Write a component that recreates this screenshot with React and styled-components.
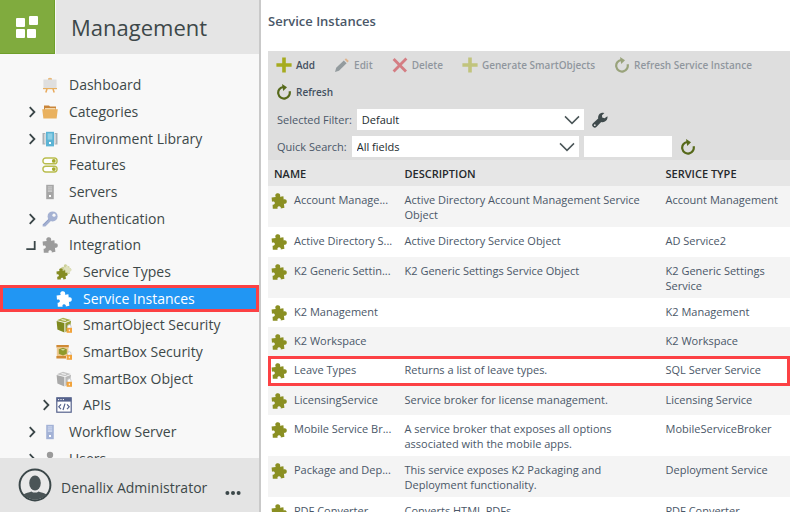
import React from "react";
import styled, { createGlobalStyle, css } from "styled-components";

const GlobalStyle = createGlobalStyle`
  *, *::before, *::after { box-sizing: border-box; }
  body { margin: 0; background: #fff; }
  body, button, input, select { font-family: "Open Sans", "Noto Sans", sans-serif; }
`;

/* ---------- icons ---------- */

const Svg = ({ size = 16, children, ...rest }) => (
  <svg width={size} height={size} viewBox="0 0 16 16" fill="none" aria-hidden="true" {...rest}>
    {children}
  </svg>
);

const PUZZLE =
  "M.6 4.6 4.8 4C3.6 2 4.8 .3 6.8 .3S9.7 2 9 3.8L12.4 3.2 12.7 6.6C14.2 5.8 15.8 6.8 15.8 8.6S14.2 11.4 12.9 10.6L13.4 14.8 9.8 15.4C10.2 14 9.2 13 7.9 13.2S6.2 14.2 6.6 15.7L1.8 15.7 1.6 11.7C3 12 4.2 11 3.8 9.6S2.2 8.2 1 8.8Z";

const Puzzle = ({ color = "#8a8f22", size }) => (
  <Svg size={size}><path d={PUZZLE} fill={color} /></Svg>
);

const PuzzleStack = () => (
  <Svg>
    <path d={PUZZLE} fill="#cdd09a" transform="translate(5 0) scale(.66)" />
    <path d={PUZZLE} fill="#dfe1bd" transform="translate(8 1) rotate(8) scale(.5)" />
    <path d={PUZZLE} fill="#858c22" transform="translate(0 4) scale(.74)" />
  </Svg>
);

const Easel = () => (
  <Svg>
    <path d="M6 1.6Q8 0 10 1.6V3H6Z" fill="#e8b878" />
    <path d="M1.4 2.5H14.6V11H1.4Z" fill="#dfdfdf" />
    <path d="M1 11H15V12.2H1Z" fill="#e8b060" />
    <path d="M5 12 3.8 15.4M11 12 12.2 15.4" stroke="#e8a95a" strokeWidth="1.5" />
  </Svg>
);

const Folder = () => (
  <Svg>
    <path d="M2 1.6H7L8 2.6H14V6H2Z" fill="#c9853a" />
    <path d="M3 4H13.5V6H3Z" fill="#f3d9ae" />
    <path d="M.2 5.2H15.8L14.6 14.4H1.4Z" fill="#e9b15f" />
  </Svg>
);

const ServerCluster = () => (
  <Svg>
    <path d="M.5 2H3.4V13.5H.5ZM12.6 2H15.5V13.5H12.6Z" fill="#a9b0b5" />
    <path d="M2.2 3H3.4V12.5H2.2ZM12.6 3H13.8V12.5H12.6Z" fill="#d7dbde" />
    <path d="M4 .8H12V15.4H4Z" fill="#5bb3d4" />
    <path d="M5.6 2.4H10.4V8.6H5.6Z" fill="#8fd0e6" />
    <path d="M7 11H9V13H7Z" fill="#fff" />
  </Svg>
);

const Toggles = () => (
  <Svg>
    <rect x=".9" y="1" width="14.2" height="5.8" rx="2.9" fill="#fff" stroke="#b9bd4e" strokeWidth="1.4" />
    <rect x=".9" y="9.2" width="14.2" height="5.8" rx="2.9" fill="#fff" stroke="#b9bd4e" strokeWidth="1.4" />
    <circle cx="11.8" cy="3.9" r="1.9" fill="#a3a82a" />
    <circle cx="11.8" cy="12.1" r="1.9" fill="#a3a82a" />
  </Svg>
);

const Server = ({ body = "#a6a6a6", panel = "#c9c9c9" }) => (
  <Svg>
    <path d="M4.2 .8H11.8V15.2H4.2Z" fill={body} />
    <path d="M5.8 2.2H10.2V8H5.8Z" fill={panel} />
    <path d="M5.8 3.8H10.2M5.8 5.8H10.2" stroke={body} strokeWidth=".6" />
    <path d="M7 11H9V13H7Z" fill="#fff" />
  </Svg>
);

const Key = () => (
  <Svg>
    <circle cx="10.6" cy="5.4" r="5" fill="#a4b1d2" />
    <circle cx="12" cy="4.2" r="1.6" fill="#f8f8f8" />
    <path d="M7.4 7 .6 13.6V15.4H3.4L9.4 9.4Z" fill="#a4b1d2" />
    <path d="M6.8 8.4 1.4 14" stroke="#8796bf" strokeWidth=".8" />
  </Svg>
);

const Lock = () => (
  <g>
    <path d="M11.6 11V9.4a1.7 1.7 0 0 1 3.4 0V11" fill="#fff" stroke="#c9ccd0" strokeWidth="1" />
    <path d="M10.6 10.8H16V15.8H10.6Z" fill="#f1a33c" />
    <path d="M12.8 12.4H13.8V14.2H12.8Z" fill="#fff" />
  </g>
);

const Cube = ({ top, left, right }) => (
  <Svg>
    <path d="M7 .8 14.8 3 9 5.2 .8 3.2Z" fill={top} />
    <path d="M.6 4 8.4 6V15.4L1.4 12.6Z" fill={left} />
    <path d="M9.4 6 15 3.8 14 12 9.4 15.2Z" fill={right} />
    <path d="M5.6 2.6 9.8 3.4" stroke="#fff" strokeWidth=".9" />
    <Lock />
  </Svg>
);

const BoxSecurity = () => (
  <Svg>
    <path d="M.4 1H12.8V3.4H.4ZM.4 12H10V14.6H.4Z" fill="#d08a35" />
    <path d="M.8 3.4H12.4V12H.8Z" fill="#efc88f" />
    <path d="M2.8 5.2 7 3.8 10.8 5.2V9.8L7 11.6 2.8 9.8Z" fill="#8f9a2c" />
    <path d="M4.6 5.8 7 5 9.2 5.8 7 6.6Z" fill="#dfe3b4" />
    <Lock />
  </Svg>
);

const ApiWindow = () => (
  <Svg>
    <rect x=".8" y=".8" width="14.4" height="14.4" fill="#fff" stroke="#55628c" strokeWidth="1.2" />
    <path d="M.8 .8H15.2V4.6H.8Z" fill="#55628c" />
    <path d="M2 2.6H3.2M4.4 2.6H5.6M6.8 2.6H8" stroke="#fff" strokeWidth="1" />
    <path d="M5 7.4 2.8 9.8 5 12.2M11 7.4 13.2 9.8 11 12.2M9 6.6 7 13" stroke="#55628c" strokeWidth="1.2" />
  </Svg>
);

const Person = () => (
  <Svg>
    <circle cx="8" cy="4" r="3.2" fill="#9a9a9a" />
    <path d="M2.4 15C2.4 9.4 5 8 8 8s5.6 1.4 5.6 7Z" fill="#9a9a9a" />
  </Svg>
);

const Chevron = () => (
  <Svg size={12}><path d="M5 1.6 11.2 8 5 14.4" stroke="#3a4648" strokeWidth="2.4" /></Svg>
);
const OpenMark = () => (
  <Svg size={12}><path d="M11.6 2.6V13.4H.4" stroke="#3a4648" strokeWidth="2.4" /></Svg>
);

const Plus = () => (
  <Svg><path d="M6.2 .4H9.8V6.2H15.6V9.8H9.8V15.6H6.2V9.8H.4V6.2H6.2Z" fill="#a6ab1f" /></Svg>
);
const Pencil = () => (
  <Svg>
    <path d="M1 15 2.2 10.8 9.8 3.4 12.6 6.2 5 13.8Z" fill="#4b5a60" />
    <path d="M10.6 2.6 12 1.3 14.8 4 13.4 5.4Z" fill="#e08a3c" />
  </Svg>
);
const Cross = () => (
  <Svg><path d="M1.6 2 14 14.6M14.4 1.4 1.6 14.4" stroke="#cc1f2b" strokeWidth="2.8" /></Svg>
);
const Reload = () => (
  <Svg>
    <path d="M7 3A5.8 5.8 0 1 0 13.6 7.2" stroke="#56691a" strokeWidth="2.2" />
    <path d="M6 0 11 3.2 7.2 7Z" fill="#56691a" />
  </Svg>
);
const Wrench = () => (
  <Svg>
    <path d="M15.4 4.2 12.6 6.2 10.2 5.6 10 3.2 12.4 .9A4.8 4.8 0 0 0 6.2 6.4L1 11.2a2.5 2.5 0 1 0 3.6 3.6L9.2 10A5 5 0 0 0 15.4 4.2Z" fill="#3f4a4c" />
    <circle cx="2.8" cy="13.2" r=".9" fill="#dedede" />
  </Svg>
);
const DownArrow = () => (
  <Svg><path d="M1 4.4 8 11.4 15 4.4" stroke="#4b5658" strokeWidth="1.5" /></Svg>
);

/* ---------- shell ---------- */

const Shell = styled.div`
  display: flex;
  height: 100vh;
  overflow: hidden;
`;

const Sidebar = styled.nav`
  flex: 0 0 261px;
  display: flex;
  flex-direction: column;
  background: #f8f8f8;
  border-right: 2px solid #c9c9c9;
  color: #3d4849;
`;

const Brand = styled.header`
  flex: none;
  display: flex;
  gap: 1px;
  height: 55px;
  border-bottom: 1px solid #f8f8f8;
`;

const Logo = styled.a`
  display: grid;
  place-items: center;
  width: 55px;
  background: #80ab3e;
  border-right: 1px solid #6f9f2a;
  border-bottom: 1px solid #6f9f2a;
`;

const BrandTitle = styled.h1`
  flex: 1;
  margin: 0;
  padding-left: 15px;
  background: #e5e5e5;
  font-size: 22px;
  font-weight: 400;
  line-height: 54px;
`;

const Tree = styled.ul`
  flex: 1;
  min-height: 0;
  overflow: hidden;
  margin: 0;
  padding: 17px 0 0;
  list-style: none;
`;

const TreeItem = styled.li`
  height: 27px;
  &:nth-child(3n + 1) { height: 26px; }
`;

const TreeLink = styled.a`
  display: grid;
  grid-template-columns: 12px 16px 1fr;
  column-gap: 4px;
  align-items: center;
  height: 100%;
  padding-left: ${(p) => (p.$nested ? 40 : 26)}px;
  color: inherit;
  font-size: 14px;
  line-height: 20px;
  text-decoration: none;
  white-space: nowrap;
  ${(p) =>
    p.$selected &&
    css`
      background: #2196f3;
      color: #fff;
      outline: 3px solid #fc4144;
      outline-offset: -3px;
    `}
`;

const TreeSlot = styled.span`
  display: flex;
`;

const TreeLabel = styled.span`
  padding-left: 7px;
`;

const UserBar = styled.footer`
  flex: none;
  display: flex;
  align-items: center;
  gap: 9px;
  height: 54px;
  padding: 0 18px;
  background: #e4e4e4;
  font-size: 14px;
`;

const UserName = styled.span`
  flex: 1;
  padding-top: 5px;
  white-space: nowrap;
`;

const MoreButton = styled.button`
  display: flex;
  padding: 16px 0 0;
  border: 0;
  background: none;
`;

const tree = [
  { label: "Dashboard", icon: <Easel /> },
  { label: "Categories", icon: <Folder />, mark: <Chevron /> },
  { label: "Environment Library", icon: <ServerCluster />, mark: <Chevron /> },
  { label: "Features", icon: <Toggles /> },
  { label: "Servers", icon: <Server /> },
  { label: "Authentication", icon: <Key />, mark: <Chevron /> },
  { label: "Integration", icon: <Puzzle color="#9b9b9b" />, mark: <OpenMark /> },
  { label: "Service Types", icon: <PuzzleStack />, nested: true },
  { label: "Service Instances", icon: <Puzzle color="#fff" />, nested: true, selected: true },
  { label: "SmartObject Security", icon: <Cube top="#a8b04a" left="#7f8a1f" right="#929b32" />, nested: true },
  { label: "SmartBox Security", icon: <BoxSecurity />, nested: true },
  { label: "SmartBox Object", icon: <Cube top="#c4c4c4" left="#a9a9a9" right="#b8b8b8" />, nested: true },
  { label: "APIs", icon: <ApiWindow />, mark: <Chevron />, nested: true },
  { label: "Workflow Server", icon: <Server body="#a3b2d6" panel="#c9d4ec" />, mark: <Chevron /> },
  { label: "Users", icon: <Person />, mark: <Chevron /> },
];

/* ---------- main panel ---------- */

const Main = styled.main`
  flex: 1;
  min-width: 0;
  padding: 0 10px 0 7px;
  color: #4a5768;
`;

const PageTitle = styled.h2`
  margin: 0 0 8px;
  font-size: 13px;
  font-weight: 600;
  line-height: 43px;
`;

const Toolbar = styled.section`
  padding: 0 8px;
  background: #dedede;
`;

const Actions = styled.div`
  display: flex;
  flex-wrap: wrap;
  column-gap: 19px;
  padding-bottom: 1px;
`;

const ActionButton = styled.button`
  display: flex;
  align-items: center;
  gap: 4px;
  height: 27px;
  padding: 0;
  border: 0;
  background: none;
  color: #43505f;
  font-size: 10px;
  font-weight: 600;
  white-space: nowrap;
  &:disabled { opacity: 0.5; }
`;

const FilterRow = styled.div`
  display: flex;
  align-items: center;
  height: 27px;
  padding-left: 1px;
  font-size: 11px;
`;

const FilterLabel = styled.label`
  padding-right: 5px;
  white-space: nowrap;
`;

const SelectBox = styled.span`
  flex: 0 1 227px;
  display: grid;
  grid-template-columns: 1fr 20px;
  align-items: center;
  background: #fff;
  svg { grid-area: 1 / 2; pointer-events: none; }
`;

const Select = styled.select`
  grid-area: 1 / 1 / 2 / 3;
  appearance: none;
  height: 21px;
  min-width: 0;
  padding: 0 20px 0 5px;
  border: 0;
  border-radius: 0;
  background: transparent;
  color: #222b2e;
  font-size: 11px;
`;

const SearchInput = styled.input`
  flex: 0 1 88px;
  min-width: 0;
  height: 21px;
  margin-left: 5px;
  padding: 0 5px;
  border: 0;
  font-size: 11px;
`;

const IconButton = styled.button`
  display: flex;
  margin-left: 8px;
  padding: 0;
  border: 0;
  background: none;
`;

const Table = styled.table`
  width: 100%;
  table-layout: fixed;
  border-collapse: collapse;
  font-size: 11px;
  line-height: 15px;
`;

const HeadCell = styled.th`
  width: ${(p) => p.$width};
  height: 26px;
  padding: 0 6px;
  background: #e6e6e6;
  color: #25292c;
  font-weight: 600;
  text-align: left;
`;

const Row = styled.tr`
  height: 29px;
  &:nth-child(4n + 2) { height: 30px; }
  &:nth-child(odd) { background: #f4f4f4; }
  ${(p) =>
    p.$marked &&
    css`
      outline: 3px solid #fc4144;
      outline-offset: -3px;
    `}
`;

const Cell = styled.td`
  padding: 6px 6px 5px;
  vertical-align: top;
`;

const NameCell = styled(Cell)`
  padding: 6px 6px 0 3px;
`;

const NameContent = styled.div`
  display: flex;
  gap: 7px;
  height: 17px;
  svg { flex: none; align-self: flex-end; }
`;

const NameText = styled.span`
  white-space: nowrap;
`;

const rows = [
  ["Account Manage...", "Active Directory Account Management Service Object", "Account Management"],
  ["Active Directory S...", "Active Directory Service Object", "AD Service2"],
  ["K2 Generic Settin...", "K2 Generic Settings Service Object", "K2 Generic Settings Service"],
  ["K2 Management", "", "K2 Management"],
  ["K2 Workspace", "", "K2 Workspace"],
  ["Leave Types", "Returns a list of leave types.", "SQL Server Service"],
  ["LicensingService", "Service broker for license management.", "Licensing Service"],
  ["Mobile Service Br...", "A service broker that exposes all options associated with the mobile apps.", "MobileServiceBroker"],
  ["Package and Dep...", "This service exposes K2 Packaging and Deployment functionality.", "Deployment Service"],
  ["PDF Converter", "Converts HTML PDFs", "PDF Converter"],
];

const actions = [
  { label: "Add", icon: <Plus /> },
  { label: "Edit", icon: <Pencil />, disabled: true },
  { label: "Delete", icon: <Cross />, disabled: true },
  { label: "Generate SmartObjects", icon: <Plus />, disabled: true },
  { label: "Refresh Service Instance", icon: <Reload />, disabled: true },
  { label: "Refresh", icon: <Reload /> },
];

export default function App() {
  return (
    <Shell>
      <GlobalStyle />
      <Sidebar aria-label="Management">
        <Brand>
          <Logo href="#home" aria-label="Home">
            <svg width="24" height="24" viewBox="0 0 24 24" aria-hidden="true" fill="#fff">
              <rect x="1" y="3" width="9" height="9" rx="1" />
              <rect x="14" y="1" width="9" height="9" rx="1" />
              <rect x="1" y="14" width="9" height="9" rx="1" />
              <rect x="12" y="14" width="9" height="9" rx="1" />
            </svg>
          </Logo>
          <BrandTitle>Management</BrandTitle>
        </Brand>
        <Tree>
          {tree.map((item) => (
            <TreeItem key={item.label}>
              <TreeLink
                href="#tree"
                $nested={item.nested}
                $selected={item.selected}
                aria-current={item.selected ? "page" : undefined}
              >
                <TreeSlot>{item.mark}</TreeSlot>
                <TreeSlot>{item.icon}</TreeSlot>
                <TreeLabel>{item.label}</TreeLabel>
              </TreeLink>
            </TreeItem>
          ))}
        </Tree>
        <UserBar>
          <svg width="34" height="34" viewBox="0 0 34 34" aria-hidden="true">
            <circle cx="17" cy="17" r="15.4" fill="#e9e9e9" stroke="#3b4749" strokeWidth="2" />
            <ellipse cx="17" cy="15" rx="5.8" ry="7.4" fill="#4b5557" />
            <path d="M5.6 26.4C7.6 24.6 11 24.4 13.4 23.4 15.4 25 18.6 25 20.6 23.4 23 24.4 26.4 24.6 28.4 26.4A15 15 0 0 1 5.6 26.4Z" fill="#4b5557" />
          </svg>
          <UserName>Denallix Administrator</UserName>
          <MoreButton type="button" aria-label="More options">
            <svg width="16" height="6" viewBox="0 0 16 6" fill="#3b4749" aria-hidden="true">
              <circle cx="2.4" cy="3" r="2" />
              <circle cx="8" cy="3" r="2" />
              <circle cx="13.6" cy="3" r="2" />
            </svg>
          </MoreButton>
        </UserBar>
      </Sidebar>

      <Main>
        <PageTitle>Service Instances</PageTitle>
        <Toolbar>
          <Actions>
            {actions.map((a) => (
              <ActionButton key={a.label} type="button" disabled={a.disabled}>
                {a.icon}
                {a.label}
              </ActionButton>
            ))}
          </Actions>
          <FilterRow>
            <FilterLabel htmlFor="filter">Selected Filter:</FilterLabel>
            <SelectBox>
              <Select id="filter"><option>Default</option></Select>
              <DownArrow />
            </SelectBox>
            <IconButton type="button" aria-label="Configure filter"><Wrench /></IconButton>
          </FilterRow>
          <FilterRow>
            <FilterLabel htmlFor="field">Quick Search:</FilterLabel>
            <SelectBox>
              <Select id="field"><option>All fields</option></Select>
              <DownArrow />
            </SelectBox>
            <SearchInput type="text" aria-label="Search text" />
            <IconButton type="button" aria-label="Run search"><Reload /></IconButton>
          </FilterRow>
        </Toolbar>
        <Table>
          <thead>
            <tr>
              <HeadCell scope="col" $width="25%">NAME</HeadCell>
              <HeadCell scope="col" $width="50%">DESCRIPTION</HeadCell>
              <HeadCell scope="col" $width="25%">SERVICE TYPE</HeadCell>
            </tr>
          </thead>
          <tbody>
            {rows.map(([name, description, type]) => (
              <Row key={name} $marked={name === "Leave Types"}>
                <NameCell>
                  <NameContent>
                    <Puzzle />
                    <NameText>{name}</NameText>
                  </NameContent>
                </NameCell>
                <Cell>{description}</Cell>
                <Cell>{type}</Cell>
              </Row>
            ))}
          </tbody>
        </Table>
      </Main>
    </Shell>
  );
}
